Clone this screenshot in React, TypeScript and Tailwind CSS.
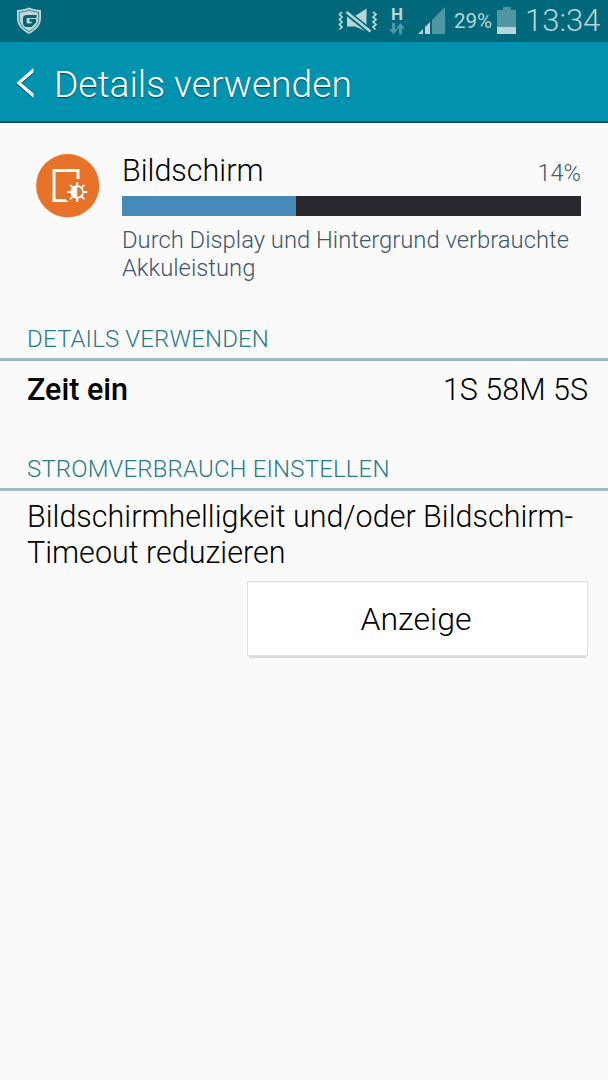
import type { ReactNode } from "react";

function ShieldIcon() {
  return (
    <svg width="26" height="28" viewBox="0 0 26 28" className="shrink-0">
      <path d="M13 .5C9.500 2 5.500 2.900 1 2.900v8.300c0 7 4.500 11.600 12 15.700 7.500-4.100 12-8.700 12-15.700V2.900C20.500 2.900 16.500 2 13 .5Z" fill="#b9d5d9" />
      <path d="M13 3C10 4.200 6.800 5 3.300 5.200v6.300c0 5.900 3.400 9.500 9.700 13.100 6.300-3.600 9.700-7.200 9.700-13.100V5.200C19.200 5 16 4.200 13 3Z" fill="none" stroke="#3f8590" strokeWidth="1" />
      <path d="M20.500 8H11C8.300 8 7 9.300 7 11.500v4.300c0 2.800 1.500 4.200 4 4.200h4.500l4.500-4.500V12h-6.500v2.700h3L15 16.500h-3c-1 0-1.500-.6-1.500-1.500v-2.500c0-1 .5-1.500 1.500-1.500h8.500Z" fill="#04616f" />
    </svg>
  );
}

function VibrateMuteIcon() {
  return (
    <svg width="40" height="26" viewBox="0 0 40 26" className="shrink-0">
      <g fill="none" stroke="#b9d5d9" strokeWidth="1.700">
        <path d="M4 4l-2.500 2.500L4 9l-2.500 2.500L4 14l-2.500 2.500L4 19l-2.500 2.500" />
        <path d="M35 4l3 2.500L35 9l3 2.500L35 14l3 2.500L35 19l2.500 2.500" />
      </g>
      <path d="M9 8h8L28.500 .5v23L17 18.500H9Z" fill="#b9d5d9" />
      <path d="M7 3l26 21" stroke="#00687a" strokeWidth="6" />
      <path d="M8.500 4l24 19.500" stroke="#b9d5d9" strokeWidth="2.600" />
    </svg>
  );
}

function DataIcon() {
  return (
    <div className="flex w-4 flex-col items-center">
      <span className="text-[17px] leading-[14px] font-bold">H</span>
      <svg width="16" height="12" viewBox="0 0 16 12" className="mt-0.5">
        <path d="M3 0h3v6h3l-4.500 5.500L0 6h3ZM10 11.500h3V5.500h3L11.500 0 7 5.500h3Z" fill="#4f97a2" />
      </svg>
    </div>
  );
}

function SignalIcon() {
  return (
    <svg width="28" height="28" viewBox="0 0 28 28" className="shrink-0">
      <path d="M0 27l5-5v5ZM7 27v-7l5-5v12Z" fill="#b9d5d9" />
      <path d="M14 27V13L27 0v27Z" fill="#4f97a2" />
    </svg>
  );
}

function BatteryIcon() {
  return (
    <svg width="19" height="28" viewBox="0 0 19 28" className="shrink-0">
      <path d="M6 0h8v3h5v24H0V3h6Z" fill="#4f97a2" />
      <path d="M0 20h19v7H0Z" fill="#b9d5d9" />
    </svg>
  );
}

function DisplayIcon() {
  return (
    <svg width="64" height="64" viewBox="0 0 64 64" className="shrink-0">
      <circle cx="31.700" cy="31.700" r="31.600" fill="#e87328" />
      <path d="M42 25V16.500H18v30h12" fill="none" stroke="#fff" strokeWidth="3" />
      <path d="M29 45l3.500 3H29Z" fill="#fff" />
      <g stroke="#fff" strokeWidth="2">
        <path d="M41.200 28.200v4M41.200 44v4M31.200 38h4M47.200 38h4M34.100 30.900l3 3M45.300 42.100l3 3M34.100 45.100l3-3M45.300 33.900l3-3" />
      </g>
      <circle cx="41.200" cy="38" r="5.900" fill="#e87328" stroke="#fff" strokeWidth="1.600" />
      <path d="M41.200 32a6 6 0 0 0 0 12Z" fill="#fff" />
    </svg>
  );
}

function SectionTitle({ children }: { children: ReactNode }) {
  return (
    <h2 className="h-[42px] border-b-3 border-[#9bb9bf] pl-[27px] text-[24px] leading-[40px] tracking-[0.15px] whitespace-nowrap text-[#2b7a87]">
      {children}
    </h2>
  );
}

export default function App() {
  const usage = 38;

  return (
    <div className="h-[1080px] w-[608px] overflow-hidden bg-[#fafafa] font-['Roboto',sans-serif] font-light text-black">
      <div className="flex h-[42px] items-start bg-[#00687a] text-[#b9d5d9]">
        <div className="pt-[7px] pl-4">
          <ShieldIcon />
        </div>
        <div className="ml-[296px] pt-2">
          <VibrateMuteIcon />
        </div>
        <div className="ml-[11px] pt-[7px]">
          <DataIcon />
        </div>
        <div className="ml-[13px] pt-[7px]">
          <SignalIcon />
        </div>
        <span className="ml-[8px] w-[43px] text-[20.500px] leading-[43px] font-normal">29%</span>
        <div className="pt-[7px]">
          <BatteryIcon />
        </div>
        <span className="ml-[9px] text-[31px] leading-[41px] whitespace-nowrap">13:34</span>
      </div>

      <header className="flex h-[81px] items-center border-b-2 border-[#064a5c] bg-[#0092af] pl-4 text-white">
        <svg width="20" height="32" viewBox="0 0 20 32" className="mt-0.5 drop-shadow-[0_1px_0_#00465a]">
          <path d="M17.500 1v4.500L5 16l12.500 10.500V31L.5 16Z" fill="#fff" />
        </svg>
        <h1 className="ml-[18px] pt-1 text-[37.200px] leading-[40px] whitespace-nowrap [text-shadow:0_1px_1px_#00465a]">
          Details verwenden
        </h1>
      </header>

      <section className="flex h-[196px] pt-[31px] pl-9">
        <DisplayIcon />
        <div className="ml-[22px] w-[459px]">
          <div className="flex h-[42px] justify-between">
            <span className="text-[30.500px] leading-[34px]">Bildschirm</span>
            <span className="text-[23.500px] leading-[38px] text-[#3f566b]">14%</span>
          </div>
          <div className="h-5 bg-[#2a272e]">
            <div className="h-full bg-[#468ab8]" style={{ width: `${usage}%` }} />
          </div>
          <p className="pt-[10px] text-[23.800px] leading-7 whitespace-nowrap text-[#3f566b]">
            Durch Display und Hintergrund verbrauchte
            <br />
            Akkuleistung
          </p>
        </div>
      </section>

      <SectionTitle>DETAILS VERWENDEN</SectionTitle>
      <div className="flex h-[88px] justify-between pr-5 pl-[27px] text-[30.500px] leading-[58px]">
        <span className="font-medium">Zeit ein</span>
        <span>1S 58M 5S</span>
      </div>

      <SectionTitle>STROMVERBRAUCH EINSTELLEN</SectionTitle>
      <p className="pt-[8px] pl-[27px] text-[30.500px] leading-9 whitespace-nowrap">
        Bildschirmhelligkeit und/oder Bildschirm-
        <br />
        Timeout reduzieren
      </p>
      <div className="mt-[10px] flex justify-end pr-5">
        <button className="h-[75px] w-[341px] border border-[#dde0e0] bg-white pt-px pr-[3px] text-[32px] shadow-[0_4px_0_-2px_#d8dede]">
          Anzeige
        </button>
      </div>
    </div>
  );
}
